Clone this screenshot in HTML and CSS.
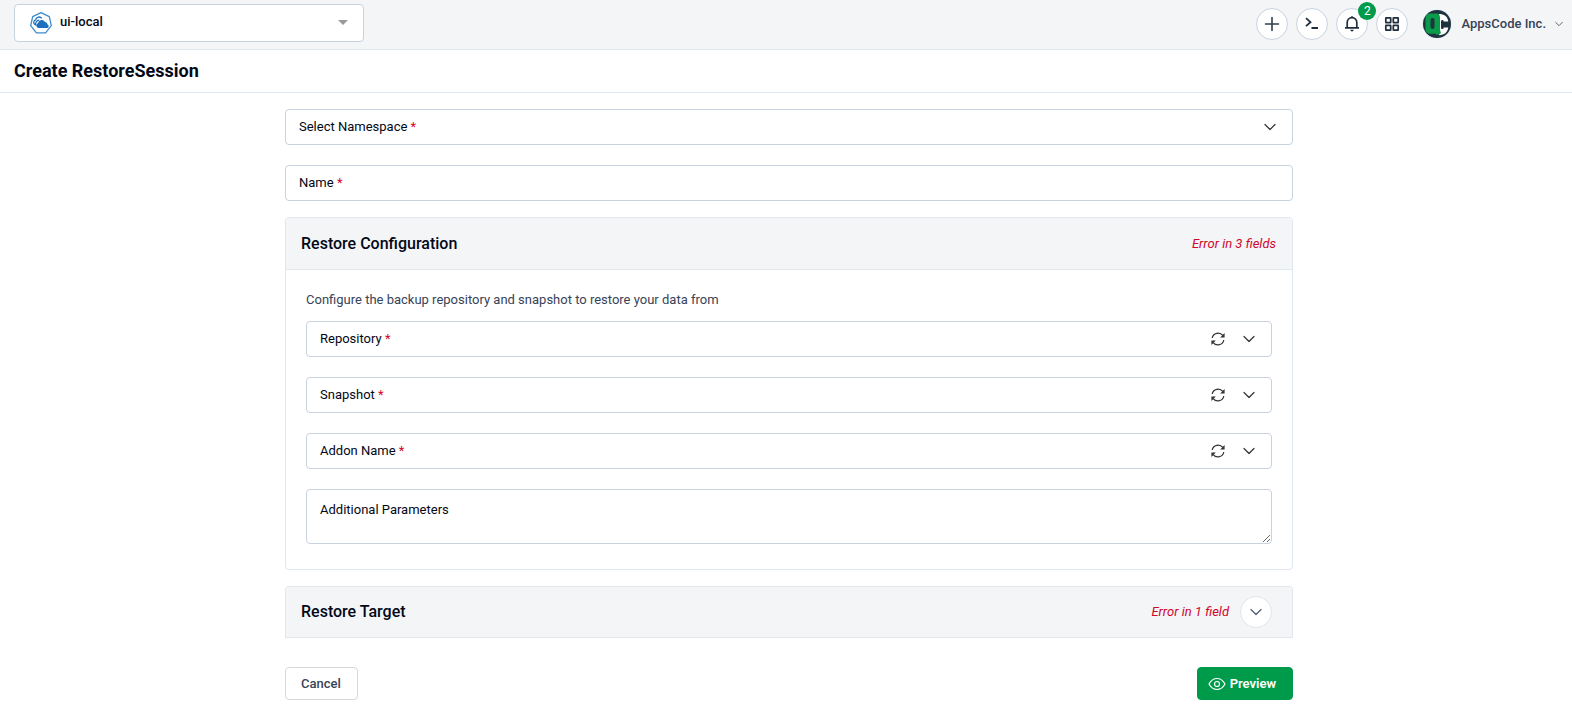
FILE: index.html
```html
<!DOCTYPE html>
<html lang="en">
<head>
    <meta charset="UTF-8">
    <meta name="viewport" content="width=device-width, initial-scale=1.0">
    <title>Create RestoreSession</title>
    <link rel="stylesheet" href="styles.css">
</head>
<body>
    <!-- shared icons -->
    <svg class="sprite" aria-hidden="true">
        <symbol id="chevron" viewBox="0 0 12 8">
            <path d="M1 1.5l5 5 5-5" fill="none" stroke="currentColor" stroke-width="1.2" stroke-linecap="round" stroke-linejoin="round"/>
        </symbol>
        <symbol id="refresh" viewBox="0 0 14 14">
            <path d="M1.2 6a6 6 0 0 1 10.6-2.6M12.8 8A6 6 0 0 1 2.2 10.6" fill="none" stroke="currentColor" stroke-width="1.2"/>
            <path d="M13.6 1v4.4H9.2zM.4 13V8.6h4.4z" fill="currentColor"/>
        </symbol>
    </svg>

    <header class="navbar">
        <div class="cluster">
            <svg class="cluster-logo" viewBox="0 0 24 24" aria-hidden="true">
                <path d="M12 1.6l8.3 4 2 9-5.7 7.2H7.4l-5.7-7.2 2-9z" fill="#fff" stroke="#3f8ccb" stroke-width="1.3" stroke-linejoin="round"/>
                <path d="M6 13.600a2.600 2.600 0 0 1 .6-4.700 3.500 3.500 0 0 1 6.200-1.500" fill="none" stroke="#1b6fbd" stroke-width="1.3"/>
                <path d="M9.500 17a2.500 2.500 0 0 1-.4-4.900 3.700 3.700 0 0 1 6.900-1.200 2.900 2.900 0 0 1 2.600 2.700A1.800 1.800 0 0 1 18.300 17z" fill="#1b6fbd"/>
                <path d="M6.600 14.500c-.5-3 1.200-5 3.600-5.300" fill="none" stroke="#1b6fbd" stroke-width="1.2"/>
            </svg>
            <select class="cluster-select" aria-label="Cluster">
                <option>ui-local</option>
            </select>
            <svg class="caret" viewBox="0 0 10 5" aria-hidden="true"><path d="M0 0h10L5 5z" fill="#999"/></svg>
        </div>
        <div class="nav-actions">
            <button class="round" type="button" aria-label="Create">
                <svg viewBox="0 0 16 16"><path d="M8 1.500v13M1.500 8h13" stroke="#2e3d50" stroke-width="1.600" stroke-linecap="round"/></svg>
            </button>
            <button class="round" type="button" aria-label="Terminal">
                <svg viewBox="0 0 16 16"><path d="M2 2.200l4.500 4-4.500 4M7.500 12h6.500" fill="none" stroke="#1f2d3d" stroke-width="1.800"/></svg>
            </button>
            <button class="round" type="button" aria-label="Notifications">
                <svg viewBox="0 0 16 16">
                    <path d="M3.200 11.700V6.400a4.800 4.800 0 0 1 9.600 0v5.300M1 11.900h14" fill="none" stroke="#1f2d3d" stroke-width="1.700"/>
                    <path d="M8 .3v1.500" stroke="#1f2d3d" stroke-width="1.600"/>
                    <path d="M6.300 13.800h3.400a1.700 1.700 0 0 1-3.400 0z" fill="#1f2d3d"/>
                </svg>
                <span class="badge">2</span>
            </button>
            <button class="round" type="button" aria-label="Applications">
                <svg viewBox="0 0 16 16">
                    <g fill="none" stroke="#1f2d3d" stroke-width="1.700">
                        <rect x="1.800" y="1.800" width="4.900" height="4.900" rx=".4"/>
                        <rect x="9.300" y="1.800" width="4.900" height="4.900" rx=".4"/>
                        <rect x="1.800" y="9.300" width="4.900" height="4.900" rx=".4"/>
                        <rect x="9.300" y="9.300" width="4.900" height="4.900" rx=".4"/>
                    </g>
                </svg>
            </button>
            <button class="account" type="button">
                <svg class="avatar" viewBox="0 0 30 30" aria-hidden="true">
                    <circle cx="15" cy="15" r="14.500" fill="#dde4f0"/>
                    <circle cx="15" cy="15" r="14" fill="#1e333d"/>
                    <path d="M17 5c5 0 8.500 2 9.300 7.500h-4.600c0-2-2.700-2-2.700 0v6c0 2 2.700 2 2.700 0h4.600c-.8 5-4 7.500-9.300 7.700z" fill="#fff"/>
                    <path d="M8 4.500h6a4 4 0 0 1 4 4v12c0 1.800.800 1.500.800 3.300 0 2.200-3.800 2.700-5.300.900H8a4.500 4.500 0 0 1-4.500-4.500V9A4.500 4.500 0 0 1 8 4.500z" fill="#0a9b4a"/>
                    <rect x="8.500" y="9" width="4" height="11" rx="2" fill="#1e333d"/>
                </svg>
                <span>AppsCode Inc.</span>
                <svg class="chevron-small"><use href="#chevron"/></svg>
            </button>
        </div>
    </header>

    <div class="page-title">
        <h1>Create RestoreSession</h1>
    </div>

    <main>
        <form class="form">
            <div class="field">
                <label for="namespace">Select Namespace <span class="required">*</span></label>
                <select id="namespace"><option></option></select>
                <svg class="chevron"><use href="#chevron"/></svg>
            </div>
            <div class="field">
                <label for="name">Name <span class="required">*</span></label>
                <input id="name" type="text">
            </div>

            <section class="card">
                <div class="card-header">
                    <h2>Restore Configuration</h2>
                    <span class="error">Error in 3 fields</span>
                </div>
                <div class="card-body">
                    <p>Configure the backup repository and snapshot to restore your data from</p>
                    <div class="field">
                        <label for="repository">Repository <span class="required">*</span></label>
                        <select id="repository"><option></option></select>
                        <button class="refresh" type="button" aria-label="Refresh repositories"><svg><use href="#refresh"/></svg></button>
                        <svg class="chevron"><use href="#chevron"/></svg>
                    </div>
                    <div class="field">
                        <label for="snapshot">Snapshot <span class="required">*</span></label>
                        <select id="snapshot"><option></option></select>
                        <button class="refresh" type="button" aria-label="Refresh snapshots"><svg><use href="#refresh"/></svg></button>
                        <svg class="chevron"><use href="#chevron"/></svg>
                    </div>
                    <div class="field">
                        <label for="addon">Addon Name <span class="required">*</span></label>
                        <select id="addon"><option></option></select>
                        <button class="refresh" type="button" aria-label="Refresh addons"><svg><use href="#refresh"/></svg></button>
                        <svg class="chevron"><use href="#chevron"/></svg>
                    </div>
                    <div class="field field-area">
                        <label for="params">Additional Parameters</label>
                        <textarea id="params"></textarea>
                    </div>
                </div>
            </section>

            <section class="card card-closed">
                <div class="card-header">
                    <h2>Restore Target</h2>
                    <span class="error">Error in 1 field</span>
                    <button class="round toggle" type="button" aria-label="Expand"><svg class="chevron"><use href="#chevron"/></svg></button>
                </div>
            </section>

            <div class="form-actions">
                <button class="btn" type="button">Cancel</button>
                <button class="btn btn-primary" type="submit">
                    <svg class="eye" viewBox="0 0 18 14" aria-hidden="true">
                        <path d="M1 7c2-3.700 4.700-5.500 8-5.500S15 3.300 17 7c-2 3.700-4.700 5.500-8 5.500S3 10.700 1 7z" fill="none" stroke="#fff" stroke-width="1.200" stroke-linejoin="round"/>
                        <circle cx="9" cy="7" r="2.500" fill="none" stroke="#fff" stroke-width="1.200"/>
                    </svg>
                    Preview
                </button>
            </div>
        </form>
    </main>
</body>
</html>
```
FILE: styles.css
```css
* {
    margin: 0;
    padding: 0;
    box-sizing: border-box;
}
body {
    font-family: Roboto, sans-serif;
    font-size: 13px;
    line-height: 20px;
    color: #030817;
    background-color: #fff;
}
button, input, select, textarea {
    font: inherit;
    color: inherit;
    background: none;
    border: none;
    outline: none;
}
button {
    cursor: pointer;
}
svg {
    display: block;
    flex-shrink: 0;
}
.sprite {
    position: absolute;
    width: 0;
    height: 0;
}

/* top bar */
.navbar {
    display: flex;
    justify-content: space-between;
    align-items: center;
    height: 50px;
    padding: 0 9px 4px 14px;
    background-color: #f3f5f7;
    border-bottom: 1px solid #e1e7ef;
}
.cluster {
    display: flex;
    align-items: center;
    gap: 4px;
    width: 350px;
    height: 38px;
    padding: 0 15px 0 14px;
    background-color: #fff;
    border: 1px solid #c9d3df;
    border-radius: 4px;
}
.cluster-logo {
    width: 24px;
    height: 24px;
}
.cluster-select {
    flex: 1;
    height: 36px;
    padding: 0 3px 2px;
    font-weight: 500;
    appearance: none;
}
.caret {
    width: 10px;
    height: 5px;
}
.nav-actions {
    display: flex;
    align-items: center;
    gap: 8px;
    padding-top: 2px;
}
.round {
    position: relative;
    display: flex;
    align-items: center;
    justify-content: center;
    width: 32px;
    height: 32px;
    background-color: #fff;
    border: 1px solid #c9d3df;
    border-radius: 50%;
}
.round svg {
    width: 16px;
    height: 16px;
}
.badge {
    position: absolute;
    top: -7px;
    right: -9px;
    width: 18px;
    height: 18px;
    font-size: 12px;
    line-height: 18px;
    color: #fff;
    background-color: #009b4a;
    border-radius: 50%;
}
.account {
    display: flex;
    align-items: center;
    gap: 9px;
    padding-left: 6px;
    font-weight: 500;
    color: #374357;
}
.avatar {
    width: 30px;
    height: 30px;
}
.chevron-small {
    width: 8px;
    height: 6px;
}

.page-title {
    padding: 9px 14px;
    border-bottom: 1px solid #e1e7ef;
}
.page-title h1 {
    font-size: 18px;
    font-weight: 700;
    line-height: 24px;
}

/* form */
main {
    padding: 16px 0 16px 6px;
}
.form {
    max-width: 1008px;
    margin: 0 auto;
}
.field {
    display: flex;
    align-items: center;
    height: 36px;
    padding: 0 16px 0 13px;
    margin-bottom: 20px;
    border: 1px solid #c9d3df;
    border-radius: 4px;
}
.field label {
    white-space: nowrap;
}
.field input, .field select {
    flex: 1;
    height: 34px;
    padding: 0 8px;
    appearance: none;
}
.required, .error {
    color: #d1052d;
}
.chevron {
    width: 12px;
    height: 8px;
    color: #333;
}
.refresh {
    margin-right: 18px;
    color: #333;
}
.refresh svg {
    width: 14px;
    height: 14px;
}
.field-area {
    align-items: stretch;
    height: auto;
    padding-right: 0;
    margin-bottom: 0;
}
.field-area label {
    padding-top: 10px;
}
.field-area textarea {
    flex: 1;
    height: 53px;
    padding: 10px 8px;
    resize: vertical;
}

.card {
    margin-top: -4px;
    border: 1px solid #e1e7ef;
    border-radius: 4px;
}
.card-header {
    display: flex;
    align-items: center;
    height: 52px;
    padding: 0 16px 0 15px;
    background-color: #f3f5f7;
    border-bottom: 1px solid #e1e7ef;
    border-radius: 4px 4px 0 0;
}
.card-header h2 {
    flex: 1;
    font-size: 16px;
    font-weight: 500;
}
.error {
    font-style: italic;
}
.card-body {
    padding: 20px 20px 25px;
}
.card-body p {
    margin-bottom: 11px;
    color: #374357;
}
.card-closed {
    margin-top: 16px;
    border-bottom: none;
    border-radius: 4px 4px 0 0;
}
.card-closed .card-header {
    height: 51px;
    padding-right: 20px;
}
.toggle {
    margin-left: 11px;
    border-color: #e1e7ef;
}
.toggle .chevron {
    width: 12px;
    height: 8px;
    color: #4f5b6d;
}

.form-actions {
    display: flex;
    justify-content: space-between;
    margin-top: 29px;
}
.btn {
    display: flex;
    align-items: center;
    gap: 4px;
    height: 33px;
    padding: 0 16px 0 15px;
    font-weight: 500;
    color: #374357;
    border: 1px solid #d8d8d8;
    border-radius: 4px;
}
.btn-primary {
    padding-left: 10px;
    font-weight: 600;
    color: #fff;
    background-color: #009b4a;
    border-color: #009b4a;
}
.eye {
    width: 18px;
    height: 14px;
}
```
